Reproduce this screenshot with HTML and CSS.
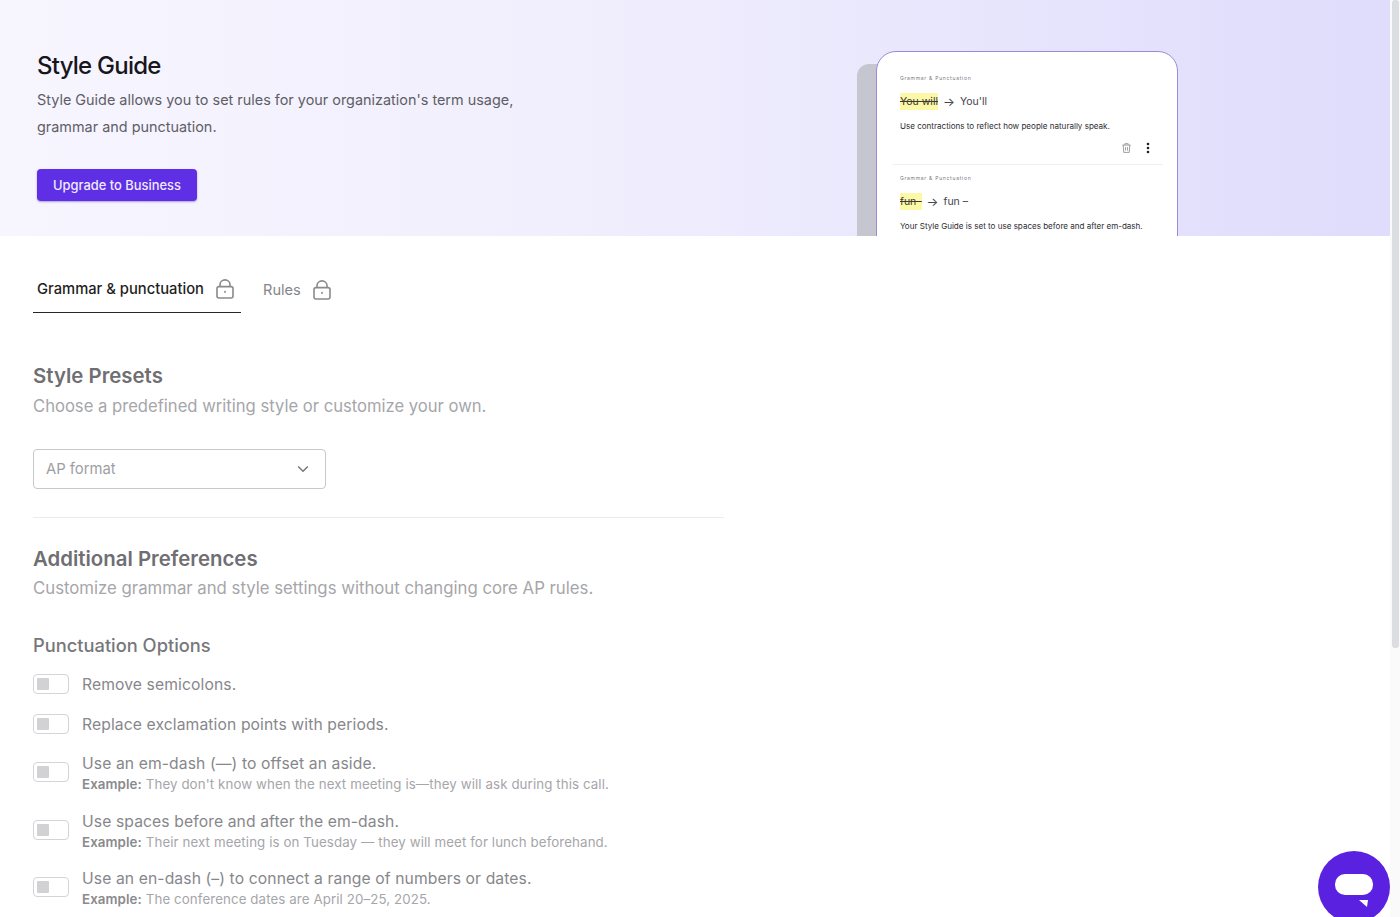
FILE: index.html
```html
<!DOCTYPE html>
<html lang="en">
<head>
<meta charset="utf-8">
<title>Style Guide</title>
<link rel="stylesheet" href="styles.css">
</head>
<body>
<div class="app">
  <main class="main">
    <section class="banner">
      <div class="intro">
        <h1>Style Guide</h1>
        <p>Style Guide allows you to set rules for your organization's term usage, grammar and punctuation.</p>
        <button class="upgrade">Upgrade to Business</button>
      </div>
      <div class="mock">
        <div class="mock-back"></div>
        <div class="mock-card">
          <div class="rule">
            <div class="rule-tag">Grammar &amp; Punctuation</div>
            <div class="rule-change"><s class="mark">You will</s><span class="arrow">→</span><span>You'll</span></div>
            <div class="rule-desc">Use contractions to reflect how people naturally speak.</div>
            <div class="rule-actions">
              <svg class="trash" viewBox="0 0 12 12" width="11" height="12" fill="none" stroke="#8a8a90" stroke-width="0.9"><path d="M1.5 2.8h9M4.2 2.6V1.3h3.6v1.3M2.4 2.8l.6 8h6l.6-8M4.9 5v3.8M7.1 5v3.8"/></svg>
              <svg class="dots" viewBox="0 0 4 12" width="4" height="12" fill="#222"><circle cx="2" cy="2" r="1.3"/><circle cx="2" cy="6" r="1.3"/><circle cx="2" cy="10" r="1.3"/></svg>
            </div>
          </div>
          <div class="rule rule-second">
            <div class="rule-tag">Grammar &amp; Punctuation</div>
            <div class="rule-change"><s class="mark">fun–</s><span class="arrow">→</span><span>fun –</span></div>
            <div class="rule-desc">Your Style Guide is set to use spaces before and after em-dash.</div>
          </div>
        </div>
      </div>
    </section>

    <section class="content">
      <nav class="tabs">
        <div class="tab active">
          <span>Grammar &amp; punctuation</span>
          <svg class="lock" viewBox="0 0 18 20" width="18" height="20" fill="none" stroke="#8a8a8e" stroke-width="1.6"><rect x="1" y="7.6" width="16" height="11.4" rx="2"/><path d="M4 7.6V5.5a5 4.6 0 0 1 10 0v2.1"/><circle cx="9" cy="12.6" r="0.8" fill="#8a8a8e" stroke="none"/><path d="M9 12.6v1.4" stroke-width="1.2"/></svg>
        </div>
        <div class="tab">
          <span>Rules</span>
          <svg class="lock" viewBox="0 0 18 20" width="18" height="20" fill="none" stroke="#8a8a8e" stroke-width="1.6"><rect x="1" y="7.6" width="16" height="11.4" rx="2"/><path d="M4 7.6V5.5a5 4.6 0 0 1 10 0v2.1"/><circle cx="9" cy="12.6" r="0.8" fill="#8a8a8e" stroke="none"/><path d="M9 12.6v1.4" stroke-width="1.2"/></svg>
        </div>
      </nav>

      <h2>Style Presets</h2>
      <p class="lead">Choose a predefined writing style or customize your own.</p>
      <div class="select">
        <span>AP format</span>
        <svg viewBox="0 0 12 8" width="12" height="8" fill="none" stroke="#77777b" stroke-width="1.5"><path d="M1.2 1.5 6 6.2l4.8-4.7"/></svg>
      </div>
      <hr class="divider">

      <h2>Additional Preferences</h2>
      <p class="lead">Customize grammar and style settings without changing core AP rules.</p>

      <h3>Punctuation Options</h3>
      <ul class="options">
        <li class="option single"><span class="toggle"><i></i></span><div class="opt-text">Remove semicolons.</div></li>
        <li class="option single"><span class="toggle"><i></i></span><div class="opt-text">Replace exclamation points with periods.</div></li>
        <li class="option"><span class="toggle"><i></i></span><div class="opt-text">Use an em-dash (—) to offset an aside.<small><b>Example:</b> They don't know when the next meeting is—they will ask during this call.</small></div></li>
        <li class="option"><span class="toggle"><i></i></span><div class="opt-text">Use spaces before and after the em-dash.<small><b>Example:</b> Their next meeting is on Tuesday — they will meet for lunch beforehand.</small></div></li>
        <li class="option"><span class="toggle"><i></i></span><div class="opt-text">Use an en-dash (–) to connect a range of numbers or dates.<small><b>Example:</b> The conference dates are April 20–25, 2025.</small></div></li>
      </ul>
    </section>
  </main>
  <div class="scrollbar"><div class="thumb"></div></div>
</div>
<button class="chat" aria-label="Chat">
  <svg viewBox="0 0 40 34" width="40" height="34"><rect x="1" y="1" width="38" height="21" rx="10" fill="#fff"/><path d="M25 27l9 0 -1 7z" fill="#fff"/></svg>
</button>
</body>
</html>
```
FILE: styles.css
```css
* { box-sizing: border-box; }
html, body { margin: 0; height: 100%; overflow: hidden; background: #fff; }
body { font-family: Inter, "Liberation Sans", sans-serif; color: #77777b; }
h1, h2, h3, p, ul { margin: 0; padding: 0; }

.app { display: flex; height: 917px; }
.main { width: 1390px; flex: none; }

.scrollbar { flex: 1; background: #fafafa; padding: 0 1px 0 2px; }
.thumb { height: 648px; background: #dcdde0; border-radius: 3px; }

.banner {
  height: 236px;
  display: flex;
  justify-content: space-between;
  overflow: hidden;
  background: linear-gradient(90deg, #f7f5fe 0%, #f1effd 40%, #dfdcfc 100%);
}
.intro { width: 500px; margin-left: 37px; padding-top: 51px; }
h1 { font-size: 24px; line-height: 30px; font-weight: 500; color: #17171b; letter-spacing: -0.75px; }
.intro p { margin-top: 5px; font-size: 14.42px; line-height: 27px; color: #5e5e66; }
.upgrade {
  display: block;
  margin-top: 29px;
  width: 160px;
  height: 32px;
  border: 0;
  border-radius: 4px;
  background: #5f2fe6;
  color: #efeaff;
  font: 500 12.9px Inter, sans-serif;
  box-shadow: 0 1px 2px rgba(60, 30, 160, .4);
}

.mock { position: relative; width: 320px; margin-right: 213px; padding-top: 51px; padding-left: 19px; }
.mock-back {
  position: absolute;
  left: 0;
  top: 64px;
  width: 40px;
  height: 190px;
  background: #c6c6d0;
  border-radius: 12px 0 0 0;
}
.mock-card {
  position: relative;
  width: 302px;
  height: 240px;
  padding: 23px 14px 0 15px;
  background: #fff;
  border: 1px solid #9a8ad8;
  border-radius: 20px 20px 0 0;
  color: #2e2e33;
}
.rule { height: 90px; padding-left: 8px; border-bottom: 1px solid #f0f0f2; }
.rule-second { border: 0; padding-top: 10px; }
.rule-tag { font-size: 5px; line-height: 6px; letter-spacing: .73px; color: #77777f; }
.rule-change { display: flex; align-items: center; gap: 5px; height: 16px; margin-top: 12px; font-size: 10.5px; color: #44444a; }
.mark { background: #fdf8a8; padding: 2px 0; color: #3a3a30; }
.arrow { font-size: 12.5px; }
.rule-desc { margin-top: 11px; font-size: 8.05px; line-height: 12px; color: #2e2e33; }
.rule-actions { display: flex; justify-content: flex-end; align-items: center; gap: 14px; margin-top: 10px; padding-right: 13px; }

.content { padding: 0 33px; }
.tabs { display: flex; gap: 22px; height: 77px; }
.tab {
  display: flex;
  align-items: center;
  gap: 12px;
  height: 77px;
  padding: 30px 0 0;
  font-size: 14.6px;
  color: #85858a;
}
.tab.active {
  width: 208px;
  padding-left: 4px;
  font-size: 14.75px;
  font-weight: 500;
  color: #1e1e22;
  border-bottom: 1px solid #26262a;
}
.lock { flex: none; }

h2 { margin-top: 50px; font-size: 20.4px; line-height: 26px; font-weight: 600; color: #6f6f73; }
.lead { margin-top: 4px; font-size: 16.62px; line-height: 26px; color: #a6a6aa; }
.select {
  display: flex;
  justify-content: space-between;
  align-items: center;
  width: 293px;
  height: 40px;
  margin-top: 30px;
  padding: 0 16px 0 12px;
  border: 1px solid #c8c8cb;
  border-radius: 4px;
  font-size: 14.8px;
  color: #9e9ea2;
}
.divider { width: 691px; margin: 28px 0 0; border: 0; border-top: 1px solid #ececee; }
.divider + h2 { margin-top: 28px; }
.divider + h2 + .lead { margin-top: 3px; font-size: 16.76px; }
h3 { margin-top: 32px; font-size: 18.3px; line-height: 24px; font-weight: 500; color: #77777b; }

.options { list-style: none; margin-top: 12px; }
.option { display: flex; align-items: center; gap: 13px; height: 46px; margin-bottom: 11px; }
.option.single { height: 30px; margin-bottom: 10px; }
.option:nth-child(3) { margin-bottom: 12px; }
.toggle { display: block; flex: none; width: 36px; height: 20px; padding: 3px; border: 1px solid #d4d4d6; border-radius: 4px; background: #fff; }
.toggle i { display: block; width: 12px; height: 12px; background: #d2d2d4; border-radius: 1px; }
.opt-text { padding-top: 2px; font-size: 15.7px; line-height: 24px; color: #87878b; letter-spacing: .1px; }
.opt-text small { display: block; margin-top: -1px; font-size: 13.3px; line-height: 19px; color: #a6a6aa; }
.opt-text b { font-weight: 600; color: #8a8a8e; }

.chat {
  position: fixed;
  left: 1318px;
  top: 851px;
  width: 72px;
  height: 72px;
  display: flex;
  align-items: center;
  justify-content: center;
  padding: 6px 0 0 0;
  border: 0;
  border-radius: 50%;
  background: #5a22e0;
}
```
